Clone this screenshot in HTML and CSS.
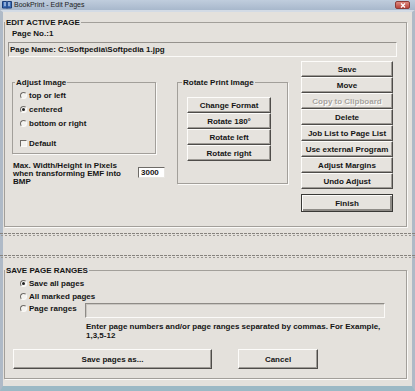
FILE: index.html
```html
<!DOCTYPE html>
<html lang="en">
  <head>
    <meta charset="UTF-8">
    <title>BookPrint - Edit Pages</title>
    <link rel="stylesheet" href="styles.css">
  </head>
  <body>
    <div class="window">
      <div class="titlebar">
        <svg class="app-icon" width="10" height="8" viewBox="0 0 10 8">
          <path d="M0.5 0.5h4l0.5 0.5l0.5-0.5h4v6.5h-4l-0.5 0.5l-0.5-0.5h-4z" fill="#3d6fb8" stroke="#1d3f78" stroke-width="1"/>
          <path d="M2 2h2M2 4h2M6 2h2M6 4h2" stroke="#dfe9f7" stroke-width="1"/>
          <path d="M5 1v6" stroke="#1d3f78" stroke-width="1"/>
        </svg>
        <span class="title">BookPrint - Edit Pages</span>
        <div class="close-btn">
          <svg width="6" height="5" viewBox="0 0 6 5"><path d="M1 0.5l4 4M5 0.5l-4 4" stroke="#fff" stroke-width="1.3"/></svg>
        </div>
      </div>
      <div class="client">
        <fieldset class="group active-page">
          <legend>EDIT ACTIVE PAGE</legend>
          <div class="page-no">Page No.:1</div>
          <div class="page-name">Page Name: C:\Softpedia\Softpedia 1.jpg</div>
          <div class="columns">
            <div class="left-col">
              <fieldset class="group adjust">
                <legend>Adjust Image</legend>
                <div class="option"><span class="radio"></span>top or left</div>
                <div class="option"><span class="radio checked"></span>centered</div>
                <div class="option"><span class="radio"></span>bottom or right</div>
                <div class="option check-row"><span class="checkbox"></span>Default</div>
              </fieldset>
              <div class="max-row">
                <div class="max-text">Max. Width/Height in Pixels when transforming EMF into BMP</div>
                <div class="num-field">3000</div>
              </div>
            </div>
            <fieldset class="group rotate">
              <legend>Rotate Print Image</legend>
              <button class="btn">Change Format</button>
              <button class="btn">Rotate 180°</button>
              <button class="btn">Rotate left</button>
              <button class="btn">Rotate right</button>
            </fieldset>
            <div class="actions">
              <button class="btn">Save</button>
              <button class="btn">Move</button>
              <button class="btn disabled">Copy to Clipboard</button>
              <button class="btn">Delete</button>
              <button class="btn">Job List to Page List</button>
              <button class="btn">Use external Program</button>
              <button class="btn">Adjust Margins</button>
              <button class="btn">Undo Adjust</button>
              <button class="btn default">Finish</button>
            </div>
          </div>
        </fieldset>

        <div class="splitter">
          <div class="dashes"></div>
          <div class="dashes"></div>
        </div>

        <fieldset class="group save-ranges">
          <legend>SAVE PAGE RANGES</legend>
          <div class="range-options">
            <div class="option first"><span class="radio checked"></span>Save all pages</div>
            <div class="option second"><span class="radio"></span>All marked pages</div>
            <div class="range-row">
              <div class="option range-label"><span class="radio"></span>Page ranges</div>
              <div class="range-field"></div>
            </div>
          </div>
          <div class="help-text">Enter page numbers and/or page ranges separated by commas. For Example,<br>1,3,5-12</div>
          <div class="bottom-buttons">
            <button class="btn save-as">Save pages as...</button>
            <button class="btn cancel">Cancel</button>
          </div>
        </fieldset>
      </div>
    </div>
  </body>
</html>
```

FILE: styles.css
```css
* {
  box-sizing: border-box;
}

body {
  margin: 0;
  background: #e4e1dc;
  font: bold 8px "Liberation Sans", Arial, sans-serif;
  color: #151515;
}

.window {
  width: 415px;
  height: 391px;
  display: flex;
  flex-direction: column;
  overflow: hidden;
}

/* title bar */
.titlebar {
  height: 10px;
  display: flex;
  align-items: center;
  background: linear-gradient(#c0cddd, #a8b8cc);
  padding-left: 2px;
}

.app-icon {
  display: block;
}

.title {
  font: 7px "Liberation Sans", Arial, sans-serif;
  color: #222;
  margin-left: 2px;
  line-height: 10px;
}

.close-btn {
  margin-left: auto;
  margin-right: 5px;
  width: 15px;
  height: 8px;
  border-radius: 2px;
  background: linear-gradient(#de8a80, #b9443c);
  border: 1px solid #8d3a35;
  display: flex;
  align-items: center;
  justify-content: center;
}

.close-btn svg {
  display: block;
}

/* window client */
.client {
  flex: 1;
  background: #e4e1dc;
  border-top: 2px solid #d3dbe5;
  border-left: 3px solid #afbac7;
  border-right: 3px solid #afbac7;
  border-bottom: 5px solid #9cb9c5;
  padding-left: 1px;
}

.group {
  margin: 0;
  padding: 0;
  min-width: 0;
  border: 1px solid #a29f9a;
  box-shadow: 1px 1px 0 #fbfaf8;
}

.group legend {
  padding: 0 1px;
  line-height: 11px;
  font-weight: bold;
  font-size: 8px;
}

.active-page {
  width: 403px;
  margin-top: 5px;
}

.page-no {
  margin: 1px 0 0 7px;
  line-height: 9px;
}

.page-name {
  margin: 4px 0 0 3px;
  width: 389px;
  height: 15px;
  line-height: 13px;
  padding-left: 1px;
  border: 1px solid;
  border-color: #95928d #fbfaf8 #fbfaf8 #95928d;
}

.columns {
  display: flex;
  align-items: flex-start;
  padding-bottom: 14px;
}

.left-col {
  width: 154px;
  margin: 20px 0 0 7px;
}

.adjust {
  width: 144px;
  padding-bottom: 3px;
}

.adjust legend {
  margin-left: 2px;
}

.option {
  display: flex;
  align-items: center;
  height: 14px;
  padding-left: 7px;
}

.option.check-row {
  margin-top: 6px;
}

.radio {
  flex-shrink: 0;
  width: 7px;
  height: 7px;
  border-radius: 50%;
  border: 1px solid;
  border-color: #6e6b67 #fbfaf8 #fbfaf8 #6e6b67;
  background: #f4f3f0;
  margin-right: 2px;
  display: flex;
  align-items: center;
  justify-content: center;
}

.radio.checked::after {
  content: "";
  width: 3px;
  height: 3px;
  border-radius: 50%;
  background: #222;
}

.checkbox {
  width: 7px;
  height: 7px;
  border: 1px solid;
  border-color: #6e6b67 #fbfaf8 #fbfaf8 #6e6b67;
  background: #f4f3f0;
  margin-right: 2px;
}

.max-row {
  display: flex;
  align-items: flex-start;
  margin: 8px 0 0 1px;
}

.max-text {
  width: 118px;
  line-height: 8px;
}

.num-field {
  width: 27px;
  height: 11px;
  margin: 5px 0 0 7px;
  background: #fff;
  border: 1px solid;
  border-color: #6e6b67 #e8e6e2 #e8e6e2 #6e6b67;
  line-height: 9px;
  padding-left: 2px;
}

.rotate {
  width: 111px;
  height: 107px;
  margin: 20px 0 0 11px;
  padding: 9px 0 0 9px;
}

.rotate legend {
  margin-left: -5px;
}

.btn {
  display: flex;
  align-items: center;
  justify-content: center;
  margin: 0;
  padding: 0;
  font: bold 8px "Liberation Sans", Arial, sans-serif;
  color: #151515;
  background: #e6e3de;
  border: 1px solid;
  border-color: #fdfcfa #4e4c49 #4e4c49 #fdfcfa;
  box-shadow: inset -1px -1px 0 #9e9b96;
  height: 16px;
  width: 84px;
}

.btn.disabled {
  color: #a6a39e;
  text-shadow: 1px 1px 0 #fff;
}

.actions {
  width: 92px;
  margin: 4px 0 0 13px;
}

.actions .btn {
  width: 92px;
}

.actions .btn.default {
  margin-top: 5px;
  height: 18px;
  border-color: #3a3936;
  box-shadow: inset 1px 1px 0 #fdfcfa, inset -2px -2px 0 #8f8c87;
}

/* dashed splitter bar */
.splitter {
  margin: 0 -8px 0 -4px;
  padding-top: 6px;
}

.dashes {
  height: 3px;
}

.dashes + .dashes {
  margin-top: 19px;
}

.dashes::before,
.dashes::after {
  content: "";
  display: block;
  height: 1px;
  background: repeating-linear-gradient(90deg, #86837e 0 3px, transparent 3px 4px);
}

.dashes::after {
  margin-top: 1px;
  background: repeating-linear-gradient(90deg, transparent 0 1px, #9b9893 1px 3px, transparent 3px 4px);
}

.save-ranges {
  width: 403px;
  margin-top: 7px;
  padding-bottom: 9px;
}

.range-options {
  padding: 1px 0 0 8px;
}

.range-options .option.first {
  height: 13px;
}

.range-options .option.second {
  height: 12px;
}

.range-row {
  display: flex;
  align-items: flex-start;
}

.range-label {
  flex: 0 0 72px;
  height: 12px;
}

.range-field {
  flex: 0 0 300px;
  height: 15px;
  margin-top: 1px;
  border: 1px solid;
  border-color: #8e8b86 #fbfaf8 #fbfaf8 #8e8b86;
  box-shadow: inset 1px 1px 0 #c9c6c1;
}

.help-text {
  margin: 4px 0 0 81px;
  line-height: 9px;
}

.bottom-buttons {
  display: flex;
  margin: 9px 0 0 8px;
}

.bottom-buttons .btn {
  height: 20px;
}

.save-as {
  width: 199px;
}

.btn.cancel {
  width: 80px;
  margin-left: 26px;
}
```
